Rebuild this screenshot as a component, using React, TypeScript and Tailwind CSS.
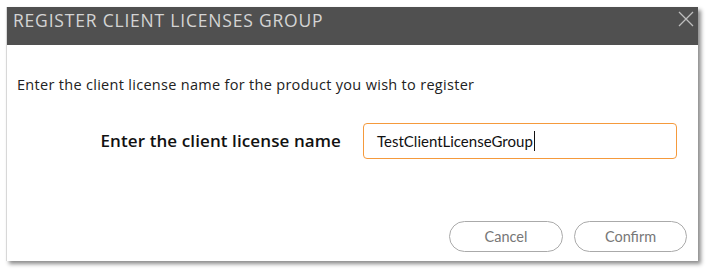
import React from "react";

export default function App() {
  return (
    <div className="w-[709px] h-[270px] bg-white pt-[7px] pl-[6px]" style={{ fontFamily: "Lato, 'Open Sans', sans-serif" }}>
      <div className="w-[692px] h-[254px] bg-white border-l border-[#d8d8d8] shadow-[3px_3px_4px_rgba(0,0,0,0.45)] flex flex-col">
        <div className="h-[38px] bg-[#505050] flex items-start justify-between pl-[6px] pr-[4px] pt-[2px]">
          <span className="text-[#d4d4d4] text-[17.5px] leading-[22px] tracking-[0.8px]" style={{ fontFamily: "'Open Sans', sans-serif" }}>REGISTER CLIENT LICENSES GROUP</span>
          <svg width="16" height="16" viewBox="0 0 16 16" className="mt-[2px]">
            <path d="M1 1 L15 15 M15 1 L1 15" stroke="#bdbdbd" strokeWidth="1.3" />
          </svg>
        </div>
        <div className="pl-[10px] pt-[30px] text-[14.5px] leading-[20px] tracking-[0.3px] text-[#222]" style={{ fontFamily: "'Open Sans', sans-serif" }}>
          Enter the client license name for the product you wish to register
        </div>
        <div className="flex items-center mt-[28px] h-[36px]">
          <div className="w-[356px] text-right pr-[22px] font-semibold text-[17px] tracking-[0.1px] text-[#111]" style={{ fontFamily: "'Open Sans', sans-serif" }}>Enter the client license name</div>
          <div className="w-[314px] h-[36px] border border-[#f59a3c] rounded-[4px] flex items-center pl-[13px] text-[15px] text-[#111]">
            TestClientLicenseGroup<span className="inline-block w-[1px] h-[20px] bg-[#111] ml-[1px]"></span>
          </div>
        </div>
        <div className="flex justify-end gap-[11px] pr-[11px] mt-[62px]">
          <button className="w-[114px] h-[31px] rounded-full border border-[#aaa] text-[#777] text-[14.5px]">Cancel</button>
          <button className="w-[113px] h-[31px] rounded-full border border-[#aaa] text-[#777] text-[14.5px]">Confirm</button>
        </div>
      </div>
    </div>
  );
}
